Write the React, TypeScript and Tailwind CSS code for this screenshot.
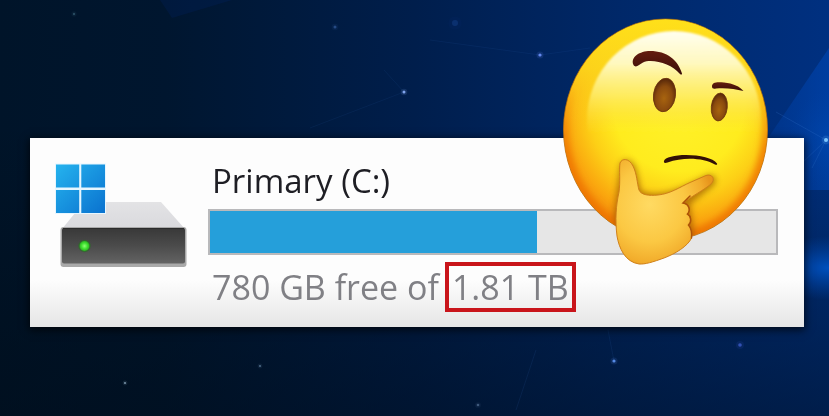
const stars = [
  { x: 74, y: 14, r: 1.2, color: "#4f7f96", opacity: 0.5 },
  { x: 335, y: 27, r: 1.5, color: "#4b79c4", opacity: 0.5 },
  { x: 404, y: 92, r: 1.5, color: "#8fb4ff", opacity: 0.9 },
  { x: 540, y: 55, r: 1.6, color: "#6f94ff", opacity: 0.9 },
  { x: 455, y: 23, r: 3, color: "#2457b4", opacity: 0.3 },
  { x: 826, y: 140, r: 2, color: "#7cc4ff", opacity: 1 },
  { x: 125, y: 383, r: 1.1, color: "#a8c6dd", opacity: 0.7 },
  { x: 260, y: 366, r: 1.1, color: "#7fa3c4", opacity: 0.6 },
  { x: 478, y: 405, r: 1.3, color: "#7c9ac0", opacity: 0.5 },
  { x: 614, y: 361, r: 1.6, color: "#5f96f5", opacity: 0.9 },
  { x: 740, y: 345, r: 1.8, color: "#4766dd", opacity: 0.7 }
]

function Backdrop() {
  return (
    <svg
      className="absolute inset-0 h-full w-full"
      viewBox="0 0 829 416"
      preserveAspectRatio="none"
      aria-hidden="true"
    >
      <defs>
        <linearGradient id="sky" x1="0" y1="0" x2="1" y2="0">
          <stop offset="0" stopColor="#001429" />
          <stop offset="0.2" stopColor="#00162f" />
          <stop offset="0.5" stopColor="#001e4c" />
          <stop offset="0.75" stopColor="#002869" />
          <stop offset="1" stopColor="#003080" />
        </linearGradient>
        <linearGradient id="dusk" x1="0" y1="0" x2="0" y2="1">
          <stop offset="0.3" stopColor="#000b12" stopOpacity="0" />
          <stop offset="1" stopColor="#000b16" stopOpacity="0.5" />
        </linearGradient>
        <radialGradient id="glow">
          <stop offset="0" stopColor="#0055c8" stopOpacity="0.9" />
          <stop offset="1" stopColor="#0048b0" stopOpacity="0" />
        </radialGradient>
        <linearGradient id="beam" x1="0" y1="0" x2="1" y2="0">
          <stop offset="0" stopColor="#0047b5" stopOpacity="0.25" />
          <stop offset="1" stopColor="#0047b5" stopOpacity="0.6" />
        </linearGradient>
      </defs>
      <rect width="829" height="416" fill="url(#sky)" />
      <rect width="829" height="416" fill="url(#dusk)" />
      <path d="M829 48L768 138V190H829Z" fill="url(#beam)" />
      <path d="M160 0H232L172 18Z" fill="#00277a" opacity="0.2" />
      <ellipse cx="829" cy="268" rx="64" ry="32" fill="url(#glow)" />
      <ellipse cx="829" cy="140" rx="40" ry="50" fill="url(#glow)" opacity="0.35" />
      <g stroke="#3d7fd6" strokeWidth="0.7" opacity="0.3">
        <path d="M826 140L776 112M826 140L800 165M826 140L812 168" />
        <path d="M404 92L384 70M404 92L310 128M540 55L430 40M540 55L590 48" opacity="0.4" />
        <path d="M614 361L608 330M536 350L516 410" opacity="0.5" />
      </g>
      {stars.map((star) => (
        <g key={`${star.x}-${star.y}`} fill={star.color} opacity={star.opacity}>
          <circle cx={star.x} cy={star.y} r={star.r * 2.2} opacity="0.15" />
          <circle cx={star.x} cy={star.y} r={star.r} />
        </g>
      ))}
    </svg>
  )
}

function DriveIcon() {
  return (
    <svg className="h-[108px] w-[136px] shrink-0" viewBox="54 162 136 108" aria-hidden="true">
      <defs>
        <linearGradient id="tile" x1="0" y1="0" x2="1" y2="1">
          <stop offset="0" stopColor="#25b3ee" />
          <stop offset="1" stopColor="#0a72cf" />
        </linearGradient>
        <linearGradient id="front" x1="0" y1="0" x2="0" y2="1">
          <stop offset="0" stopColor="#383838" />
          <stop offset="0.5" stopColor="#4b4b4b" />
          <stop offset="1" stopColor="#636363" />
        </linearGradient>
        <linearGradient id="lid" x1="0" y1="0" x2="0" y2="1">
          <stop offset="0" stopColor="#e3e3e5" />
          <stop offset="1" stopColor="#d9d9dd" />
        </linearGradient>
        <radialGradient id="led">
          <stop offset="0" stopColor="#8cff73" />
          <stop offset="0.6" stopColor="#3fe02f" />
          <stop offset="1" stopColor="#2bb021" />
        </radialGradient>
      </defs>
      <path d="M84 202H161L185 229H62Z" fill="url(#lid)" />
      <rect x="60.500" y="227" width="126" height="40" rx="3" fill="#a9a9a9" />
      <rect x="62" y="228" width="123" height="35.500" rx="2" fill="url(#front)" />
      <path d="M63 228.500H184" stroke="#2b2b2b" strokeWidth="1.200" />
      <circle cx="84.500" cy="246" r="6.200" fill="#267320" opacity="0.6" />
      <circle cx="84.500" cy="246" r="5" fill="url(#led)" />
      <rect x="55" y="163.500" width="51" height="50.500" fill="#e6f6ff" />
      <path
        d="M56 164.500H79.200V187.500H56ZM81.300 164.500H105V187.500H81.300ZM56 190H79.200V213H56ZM81.300 190H105V213H81.300Z"
        fill="url(#tile)"
      />
    </svg>
  )
}

function ThinkingFace() {
  return (
    <svg
      className="absolute -top-[122px] right-8 h-[254px] w-[212px]"
      viewBox="560 16 212 254"
      role="img"
      aria-label="Thinking face"
    >
      <defs>
        <radialGradient id="skin" gradientUnits="userSpaceOnUse" cx="679" cy="106" r="142">
          <stop offset="0" stopColor="#fff22a" />
          <stop offset="0.46" stopColor="#ffec1e" />
          <stop offset="0.64" stopColor="#fdd016" />
          <stop offset="0.82" stopColor="#faa50e" />
          <stop offset="1" stopColor="#ef7606" />
        </radialGradient>
        <linearGradient id="rim" x1="0" y1="0" x2="0" y2="1">
          <stop offset="0" stopColor="#ffe01a" />
          <stop offset="0.22" stopColor="#fcd41b" stopOpacity="0.9" />
          <stop offset="0.5" stopColor="#fbb81a" stopOpacity="0" />
        </linearGradient>
        <linearGradient id="edge" x1="0" y1="0" x2="0" y2="1">
          <stop offset="0.3" stopColor="#ee7400" stopOpacity="0" />
          <stop offset="0.6" stopColor="#ee7400" stopOpacity="0.8" />
          <stop offset="1" stopColor="#ec7000" stopOpacity="0.8" />
        </linearGradient>
        <linearGradient id="shine" x1="0" y1="0" x2="0" y2="1">
          <stop offset="0" stopColor="#fffef0" />
          <stop offset="0.18" stopColor="#fffcd2" stopOpacity="0.9" />
          <stop offset="0.36" stopColor="#fff88c" stopOpacity="0.6" />
          <stop offset="0.58" stopColor="#fff23a" stopOpacity="0" />
        </linearGradient>
        <radialGradient id="eye" cx="0.5" cy="0.6" r="0.6">
          <stop offset="0" stopColor="#a8640f" />
          <stop offset="0.6" stopColor="#8a4a0e" />
          <stop offset="1" stopColor="#542509" />
        </radialGradient>
        <linearGradient id="brow" x1="0" y1="0" x2="0" y2="1">
          <stop offset="0" stopColor="#641d0e" />
          <stop offset="1" stopColor="#3a0d08" />
        </linearGradient>
        <radialGradient id="palm" cx="0.35" cy="0.43" r="0.65">
          <stop offset="0" stopColor="#ffda62" />
          <stop offset="0.55" stopColor="#fbc843" />
          <stop offset="0.85" stopColor="#f2ad2c" />
          <stop offset="1" stopColor="#e8951c" />
        </radialGradient>
        <clipPath id="head">
          <ellipse cx="665.500" cy="129.500" rx="102" ry="110" />
        </clipPath>
        <filter id="soft" x="-20%" y="-20%" width="140%" height="140%">
          <feGaussianBlur stdDeviation="3" />
        </filter>
        <filter id="faint">
          <feGaussianBlur stdDeviation="1.2" />
        </filter>
      </defs>
      <ellipse cx="665.500" cy="129.500" rx="102" ry="110.500" fill="url(#skin)" stroke="#a86c12" strokeWidth="0.8" />
      <ellipse cx="665.500" cy="129.500" rx="101.500" ry="110" fill="url(#rim)" />
      <g clipPath="url(#head)">
        <ellipse
          cx="665.500"
          cy="129.500"
          rx="102"
          ry="110"
          fill="none"
          stroke="url(#edge)"
          strokeWidth="11"
          filter="url(#soft)"
        />
      </g>
      <ellipse cx="674" cy="120" rx="87" ry="89" fill="url(#shine)" filter="url(#faint)" />
      <path
        d="M633.500 65C630 57 640 51 650 51C667 51 678 60 682 73.500C682 75 680.500 75 679.500 73.500C672 64 652 58 643 62.500C639 64.500 636 68.500 633.500 65Z"
        fill="url(#brow)"
      />
      <path
        d="M712 86.500C712 81.500 718 82 724 82.500C733 83.500 740 86.500 743.500 91C735 89 726 87.500 716 88.500C713.500 89 712 88.500 712 86.500Z"
        fill="url(#brow)"
      />
      <ellipse cx="664.500" cy="95" rx="11" ry="16.800" transform="rotate(8 664.500 95)" fill="url(#eye)" stroke="#6b320c" strokeWidth="0.8" />
      <ellipse cx="719.300" cy="107" rx="8" ry="14" transform="rotate(6 719.300 107)" fill="url(#eye)" stroke="#6b320c" strokeWidth="0.8" />
      <path
        d="M664 161C664.500 157.500 675 155 686 155C700 155 713 158 717 163.500C717.500 165 716.500 165 715 164.500C704 158 684 156.500 667.500 162.500C665 163.500 663.500 163 664 161Z"
        fill="#321006"
      />
      <g clipPath="url(#head)">
        <path
          d="M620 166C622 157 632 158 636 169L641 191C654 197 673 192 688 185L706 176C714 172 719 180 713 186L690 204L694 236L660 260L620 255L614 215Z"
          fill="#934b05"
          opacity="0.65"
          filter="url(#soft)"
        />
      </g>
      <path
        d="M620 163C622 158 629 158 633 166C637 174 637 183 639 190C641 195 649 196 658 195C670 194 680 187 690 182.500L706 175.500C712 173.500 716 179 711 184C704 190 692 196 683 203C689 204 691 210 687.500 214C691 216 692 222 688.500 225C692 229 692 233 691.500 238C688 246 675 254 664 258C653 262 645 264.500 639 264C625 262 619 248 617 236C615 220 616 205 619 192C620.500 182 619 170 620 163Z"
        fill="url(#palm)"
        stroke="#cf8019"
        strokeWidth="1"
      />
      <path
        d="M690 196L683 203C689 204 691 210 687.500 214C691 216 692 222 688.500 225C692 229 692 233 691.500 238"
        fill="none"
        stroke="#ad5308"
        strokeWidth="1.500"
        strokeLinecap="round"
      />
    </svg>
  )
}

const drive = {
  name: "Primary (C:)",
  free: "780 GB free of",
  total: "1.81 TB",
  used: 57.8
}

export default function App() {
  return (
    <main className="relative flex min-h-screen flex-col overflow-hidden bg-[#001328] pr-[25px] pl-[30px] pt-[138px] pb-[88px] font-['Open_Sans','Noto_Sans',sans-serif]">
      <Backdrop />
      <section className="relative flex items-start gap-[18px] bg-linear-to-b from-[#fdfdfd] from-75% to-[#e6e6e6] pt-6 pr-[26px] pb-[15px] pl-6 shadow-[0_2px_8px_1px_rgba(0,0,0,0.7)]">
        <DriveIcon />
        <div className="min-w-0 flex-1">
          <h1 id="drive-name" className="pl-1 text-[33px] leading-[38px] whitespace-nowrap text-[#1e1e24]">
            {drive.name}
          </h1>
          <div
            role="progressbar"
            aria-labelledby="drive-name"
            aria-valuenow={drive.used}
            className="mt-[9px] h-[46px] border-2 border-[#b9b9bb] bg-[#e6e6e6]"
          >
            <div className="h-full bg-[#259fda]" style={{ width: `${drive.used}%` }} />
          </div>
          <p className="mt-[7px] flex items-center gap-1.5 pl-1 text-[34px] leading-[42px] whitespace-nowrap text-[#808085]">
            <span>{drive.free}</span>
            <span className="border-4 border-[#c9151b] px-[3px]">{drive.total}</span>
          </p>
        </div>
        <ThinkingFace />
      </section>
    </main>
  )
}
